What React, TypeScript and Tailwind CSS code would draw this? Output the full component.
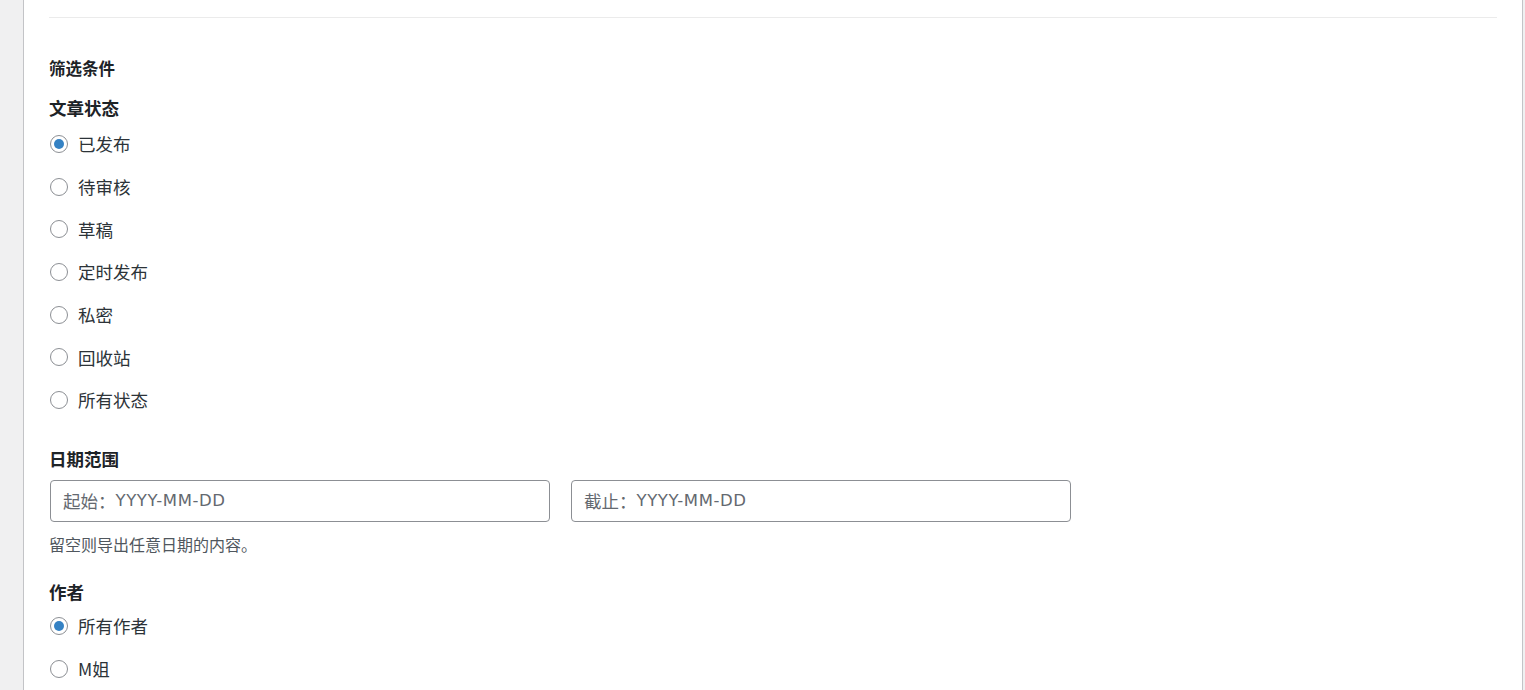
import React from "react";

const font = { fontFamily: '"Noto Sans CJK SC", "Noto Sans", sans-serif' };

function Radio({ label, checked }: { label: string; checked?: boolean }) {
  return (
    <label className="flex h-[42.67px] items-center">
      <span className="ml-px flex h-[18px] w-[18px] items-center justify-center rounded-full border border-[#8c8f94] bg-white">
        {checked && <span className="h-[10px] w-[10px] rounded-full bg-[#3582c4]" />}
      </span>
      <span className="ml-[10px] text-[17.5px] leading-none text-[#2c3338]">{label}</span>
    </label>
  );
}

function DateBox({ prefix }: { prefix: string }) {
  return (
    <div className="flex h-[42px] w-[500px] items-center rounded-[4px] border border-[#8c8f94] pl-[12px] text-[17.5px] leading-none text-[#646970]">
      <span>{prefix}</span>
      <span className="tracking-[0.6px]" style={{ fontFamily: '"DejaVu Sans", sans-serif', fontSize: "16.5px" }}>
        YYYY-MM-DD
      </span>
    </div>
  );
}

export default function App() {
  const statuses = ["已发布", "待审核", "草稿", "定时发布", "私密", "回收站", "所有状态"];
  return (
    <div className="flex h-[690px] w-full overflow-hidden bg-[#f0f0f1]" style={font}>
      <div className="ml-[23px] w-[1500px] shrink-0 border-x border-[#c3c4c7] bg-white px-[25px]">
        <div className="mt-[17px] h-px w-full bg-[#ebebeb]" />
        <div className="mt-[39px] flex h-[22px] items-center text-[16.5px] font-semibold leading-none text-[#1d2327]">
          筛选条件
        </div>
        <div className="mt-[18px] flex h-[22px] items-center text-[17.5px] font-bold leading-none text-[#1d2327]">
          文章状态
        </div>
        <div className="mt-[3.67px] flex flex-col">
          {statuses.map((s, i) => (
            <Radio key={s} label={s} checked={i === 0} />
          ))}
        </div>
        <div className="mt-[26.67px] flex h-[22px] items-center text-[17.5px] font-bold leading-none text-[#1d2327]">
          日期范围
        </div>
        <div className="ml-px mt-[10px] flex gap-[21px]">
          <DateBox prefix="起始：" />
          <DateBox prefix="截止：" />
        </div>
        <div className="mt-[12px] flex h-[20px] items-center text-[16px] leading-none text-[#50575e]">
          留空则导出任意日期的内容。
        </div>
        <div className="mt-[27px] flex h-[22px] items-center text-[17.5px] font-bold leading-none text-[#1d2327]">
          作者
        </div>
        <div className="mt-[1.67px] flex flex-col">
          <Radio label="所有作者" checked />
          <Radio label="M姐" />
        </div>
      </div>
    </div>
  );
}
